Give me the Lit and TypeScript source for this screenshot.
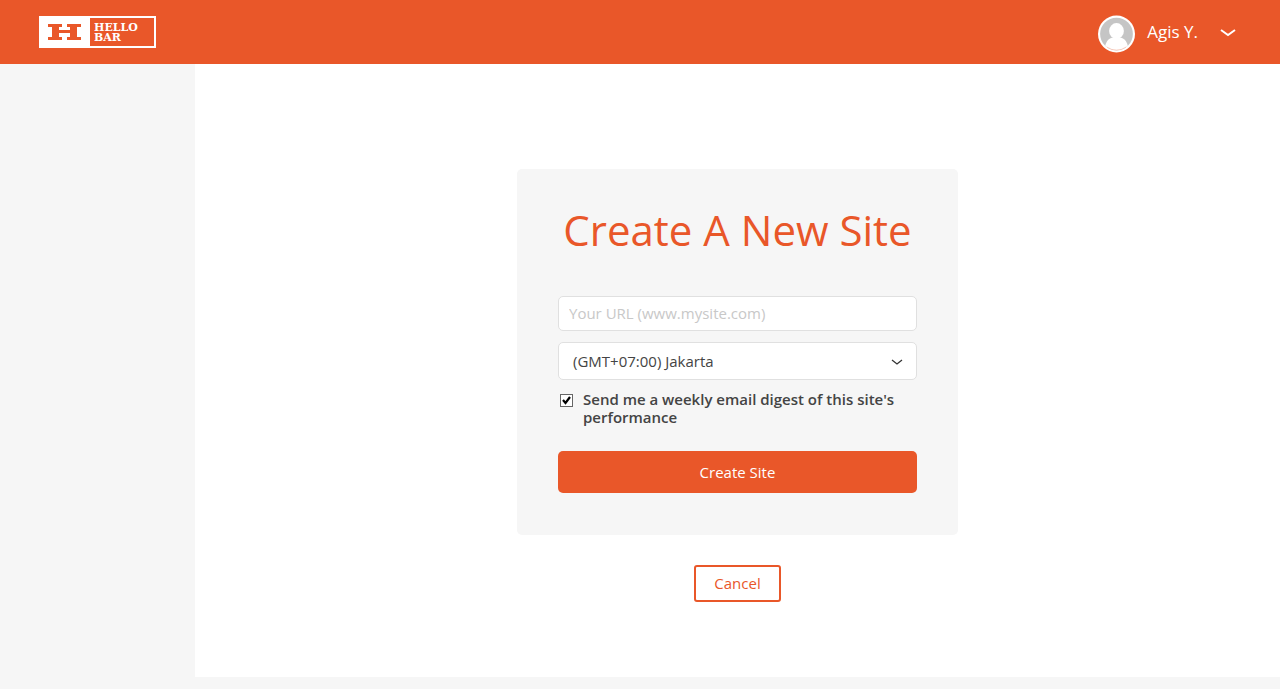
import { LitElement, html, css } from "lit";
import { customElement, state } from "lit/decorators.js";

@customElement("hello-bar-logo")
export class HelloBarLogo extends LitElement {
  static styles = css`
    :host {
      display: grid;
      grid-template-columns: 49px 1fr;
      box-sizing: border-box;
      width: 117px;
      height: 32px;
      padding: 2px;
      background: #fff;
    }
    .mark {
      display: block;
    }
    .word {
      padding: 5px 0 0 4px;
      background: #e95729;
      color: #fff;
      font: 700 11px/10px "DejaVu Serif", serif;
    }
  `;

  render() {
    return html`
      <svg class="mark" width="49" height="28" viewBox="2 2 49 28" aria-hidden="true">
        <path
          fill="#e95729"
          d="M9 8h14v3h-3V14h11v-3h-3V8h14v3h-4v10h4v3H28v-3h3V17H20v4h3v3H9v-3h4V11H9z"
        />
      </svg>
      <span class="word">HELLO<br />BAR</span>
    `;
  }
}

@customElement("app-header")
export class AppHeader extends LitElement {
  static styles = css`
    :host {
      display: flex;
      align-items: center;
      justify-content: space-between;
      box-sizing: border-box;
      height: 64px;
      padding: 0 44px 0 39px;
      background: #e95729;
    }
    .home {
      text-decoration: none;
    }
    .account {
      display: flex;
      align-items: center;
      padding: 4px 0 0;
      border: 0;
      background: none;
      color: #fff;
      font: 400 17px/24px "Open Sans", sans-serif;
      cursor: pointer;
    }
    .avatar {
      display: block;
      margin-right: 12px;
    }
    .name {
      margin-right: 22px;
      padding-bottom: 4px;
    }
    .chevron {
      display: block;
      padding-bottom: 3px;
    }
  `;

  render() {
    return html`
      <a class="home" href="#" aria-label="Hello Bar home"><hello-bar-logo></hello-bar-logo></a>
      <button class="account" type="button" aria-haspopup="menu">
        <svg class="avatar" width="37" height="38" viewBox="0 0 38 38" aria-hidden="true">
          <defs>
            <clipPath id="disc"><circle cx="19" cy="19" r="16.6" /></clipPath>
          </defs>
          <circle cx="19" cy="19" r="19" fill="#fff" />
          <circle cx="19" cy="19" r="16.8" fill="#c5c5c5" />
          <g clip-path="url(#disc)" fill="#fff">
            <ellipse cx="19" cy="15.8" rx="7.6" ry="8" />
            <path d="M6.5 38C6.5 28 10.5 23.2 15 22.5h8c4.500.7 8.500 5.500 8.500 15.500z" />
          </g>
          <path d="M9.500 32.600a16.600 16.600 0 0 0 19 0" fill="none" stroke="#f3ab94" stroke-width=".6" />
        </svg>
        <span class="name">Agis Y.</span>
        <svg class="chevron" width="16" height="10" viewBox="0 0 16 10" aria-hidden="true">
          <path d="M1 2l7 5 7-5" fill="none" stroke="#fff" stroke-width="2" />
        </svg>
      </button>
    `;
  }
}

@customElement("new-site-form")
export class NewSiteForm extends LitElement {
  @state() private digest = true;

  static styles = css`
    :host {
      display: flex;
      flex-direction: column;
      align-items: center;
      gap: 30px;
      width: 100%;
      font-family: "Open Sans", sans-serif;
      font-size: 15px;
      color: #444;
    }
    .card {
      box-sizing: border-box;
      width: 100%;
      max-width: 441px;
      padding: 31px 41px 42px;
      border-radius: 5px;
      background: #f6f6f6;
    }
    .title {
      margin: 0 0 36px;
      color: #e95729;
      font-size: 42px;
      line-height: 60px;
      font-weight: 400;
      text-align: center;
      white-space: nowrap;
    }
    .field {
      display: block;
      box-sizing: border-box;
      width: 100%;
      border: 1px solid #e0e0e0;
      border-radius: 5px;
      background: #fff;
      font: 400 15px/20px "Open Sans", sans-serif;
      color: #444;
    }
    .url {
      height: 35px;
      padding: 0 10px 2px;
    }
    .url::placeholder {
      color: #c8c8c8;
      opacity: 1;
    }
    .zone {
      position: relative;
      margin: 11px 0 10px;
    }
    .select {
      height: 38px;
      padding: 0 36px 0 14px;
      appearance: none;
    }
    .arrow {
      position: absolute;
      top: 15px;
      right: 14px;
      pointer-events: none;
    }
    .digest {
      display: flex;
      align-items: flex-start;
      gap: 10px;
      margin-bottom: 25px;
      padding-left: 2px;
      font-size: 15px;
      line-height: 18px;
      font-weight: 600;
    }
    .tick {
      flex: none;
      appearance: none;
      box-sizing: border-box;
      width: 13px;
      height: 13px;
      margin: 4px 0 0;
      border: 1px solid #666;
      background: #fff;
    }
    .tick:checked {
      background: #fff
        url("data:image/svg+xml,%3Csvg xmlns='http://www.w3.org/2000/svg' viewBox='0 0 11 11'%3E%3Cpath d='M2 5l2.500 3L9 2' fill='none' stroke='%23000' stroke-width='2.200'/%3E%3C/svg%3E");
    }
    .submit {
      display: block;
      width: 100%;
      height: 42px;
      border: 0;
      border-radius: 5px;
      background: #e95729;
      color: #fff;
      font: 400 15px/20px "Open Sans", sans-serif;
      cursor: pointer;
    }
    .cancel {
      padding: 6px 18px 7px;
      border: 2px solid #e95729;
      border-radius: 3px;
      color: #e95729;
      line-height: 20px;
      text-decoration: none;
    }
  `;

  private toggle(event: Event) {
    this.digest = (event.target as HTMLInputElement).checked;
  }

  render() {
    return html`
      <form class="card" @submit=${(e: Event) => e.preventDefault()}>
        <h1 class="title">Create A New Site</h1>
        <input class="field url" type="text" aria-label="Your URL" placeholder="Your URL (www.mysite.com)" />
        <div class="zone">
          <select class="field select" aria-label="Time zone">
            <option>(GMT+07:00) Jakarta</option>
          </select>
          <svg class="arrow" width="12" height="10" viewBox="0 0 12 10" aria-hidden="true">
            <path d="M1 3l5 4 5-4" fill="none" stroke="#333" stroke-width="1.300" />
          </svg>
        </div>
        <label class="digest">
          <input class="tick" type="checkbox" .checked=${this.digest} @change=${this.toggle} />
          <span>Send me a weekly email digest of this site's performance</span>
        </label>
        <button class="submit" type="submit">Create Site</button>
      </form>
      <a class="cancel" href="#">Cancel</a>
    `;
  }
}

@customElement("app-root")
export class AppRoot extends LitElement {
  static styles = css`
    :host {
      display: flex;
      flex-direction: column;
      min-height: 100vh;
      background: #f6f6f6;
    }
    .content {
      flex: 1;
      display: flex;
      align-items: flex-start;
      margin: 0 0 12px 195px;
      padding: 105px 20px 75px;
      background: #fff;
    }
  `;

  render() {
    return html`
      <app-header></app-header>
      <main class="content"><new-site-form></new-site-form></main>
    `;
  }
}
